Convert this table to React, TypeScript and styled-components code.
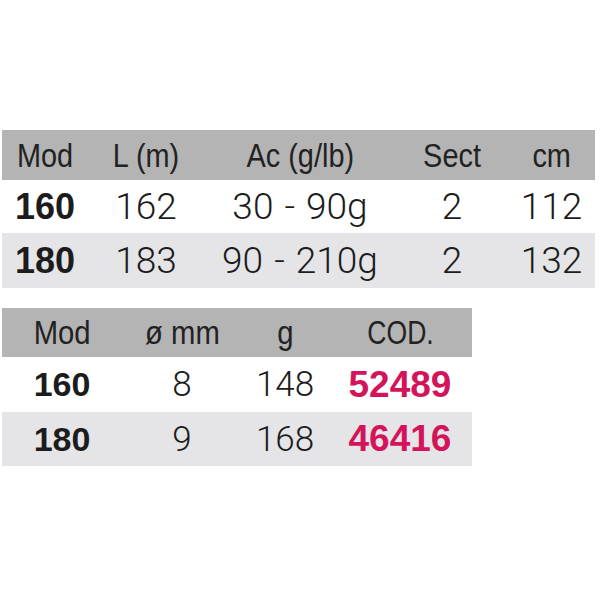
import React from 'react';
import styled, { createGlobalStyle } from 'styled-components';

const GlobalStyle = createGlobalStyle`
  html, body {
    margin: 0;
    padding: 0;
    background: #ffffff;
  }
  * {
    box-sizing: border-box;
  }
`;

const Page = styled.div`
  width: 600px;
  height: 600px;
  padding: 130px 5px 0 2px;
  display: flex;
  flex-direction: column;
  align-items: flex-start;
  gap: 20px;
  font-family: 'Liberation Sans', Arial, sans-serif;
  color: #1c1c1c;
`;

const Table = styled.div<{ cols: string; width: number }>`
  display: grid;
  grid-template-columns: ${p => p.cols};
  width: ${p => p.width}px;
`;

const Row = styled.div<{ shade: 'head' | 'white' | 'light'; h: number }>`
  display: contents;

  & > div {
    height: ${p => p.h}px;
    background: ${p =>
      p.shade === 'head' ? '#b4b4b4' : p.shade === 'light' ? '#e5e5e7' : '#ffffff'};
  }
`;

const HeadCell = styled.div`
  display: flex;
  align-items: center;
  justify-content: center;
  font-family: 'Liberation Sans', Arial, sans-serif;
  font-size: 34px;
  font-weight: 400;
  color: #222222;
  white-space: nowrap;
`;

const HeadText = styled.span<{ squeeze: number }>`
  display: inline-block;
  transform: scaleX(${p => p.squeeze});
`;

const Cell = styled.div<{ bold?: boolean; accent?: boolean; size: number }>`
  display: flex;
  align-items: center;
  justify-content: center;
  font-family: ${p => (p.bold ? "'Liberation Sans', Arial" : "Roboto, 'Liberation Sans'")}, sans-serif;
  font-size: ${p => p.size}px;
  font-weight: ${p => (p.bold ? 700 : 300)};
  color: ${p => (p.accent ? '#d3145a' : '#1c1c1c')};
  word-spacing: 2px;
  white-space: nowrap;
`;

const rodHead = ['Mod', 'L (m)', 'Ac (g/lb)', 'Sect', 'cm'];
const rodRows = [
  ['160', '162', '30 - 90g', '2', '112'],
  ['180', '183', '90 - 210g', '2', '132'],
];

const codeHead = ['Mod', 'ø mm', 'g', 'COD.'];
const codeRows = [
  ['160', '8', '148', '52489'],
  ['180', '9', '168', '46416'],
];

const App: React.FC = () => {
  return (
    <>
      <GlobalStyle />
      <Page>
        <Table cols="86px 116px 192px 112px 87px" width={593}>
          <Row shade="head" h={50}>
            {rodHead.map(t => (
              <HeadCell key={t}>
                <HeadText squeeze={0.85}>{t}</HeadText>
              </HeadCell>
            ))}
          </Row>
          {rodRows.map((r, i) => (
            <Row key={r[0]} shade={i % 2 ? 'light' : 'white'} h={i ? 55 : 53}>
              {r.map((v, j) => (
                <Cell key={j} bold={j === 0} size={j === 0 ? 36 : 37}>
                  {v}
                </Cell>
              ))}
            </Row>
          ))}
        </Table>

        <Table cols="120px 120px 86px 144px" width={470}>
          <Row shade="head" h={49}>
            {codeHead.map(t => (
              <HeadCell key={t}>
                <HeadText squeeze={t === 'COD.' ? 0.78 : 0.86}>{t}</HeadText>
              </HeadCell>
            ))}
          </Row>
          {codeRows.map((r, i) => (
            <Row key={r[0]} shade={i % 2 ? 'light' : 'white'} h={i ? 54 : 55}>
              {r.map((v, j) => (
                <Cell
                  key={j}
                  bold={j === 0 || j === 3}
                  accent={j === 3}
                  size={j === 3 ? 37 : j === 0 ? 34 : 35}
                >
                  {v}
                </Cell>
              ))}
            </Row>
          ))}
        </Table>
      </Page>
    </>
  );
};

export default App;
